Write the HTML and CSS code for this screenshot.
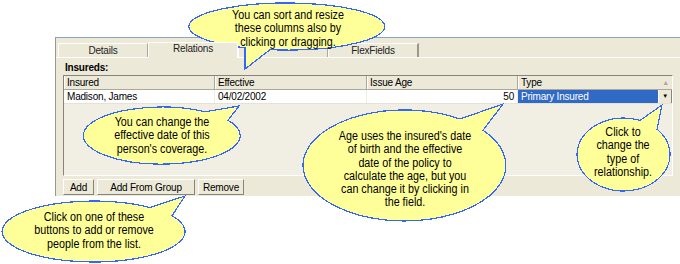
FILE: index.html
```html
<!DOCTYPE html>
<html lang="en">
<head>
  <meta charset="UTF-8">
  <title>Relations - Insureds</title>
  <link rel="stylesheet" href="styles.css">
</head>
<body>
  <div class="stage">
    <div class="window">
      <div class="tabs">
        <div class="tab">Details</div>
        <div class="tab active">Relations</div>
        <div class="tab"></div>
        <div class="tab last">FlexFields</div>
      </div>
      <div class="page">
        <div class="label">Insureds:</div>
        <div class="grid">
          <div class="row head">
            <div class="cell">Insured</div>
            <div class="cell">Effective</div>
            <div class="cell">Issue Age</div>
            <div class="cell">Type <span class="sort">&#9650;</span></div>
          </div>
          <div class="row data">
            <div class="cell">Madison, James</div>
            <div class="cell">04/02/2002</div>
            <div class="cell num">50</div>
            <div class="cell pick">
              <span class="picked">Primary Insured</span>
              <span class="drop">&#9660;</span>
            </div>
          </div>
        </div>
        <div class="buttons">
          <button class="btn add">Add</button>
          <button class="btn group">Add From Group</button>
          <button class="btn remove">Remove</button>
        </div>
      </div>
    </div>

    <!-- callouts drawn over the screenshot -->
    <svg class="bubbles" width="680" height="264" viewBox="0 0 680 264" xmlns="http://www.w3.org/2000/svg">
      <path d="M 270 49.7 A 98 23.5 0 1 0 245 47.8 L 245 69 Z" />
      <path d="M 205 111.8 A 78.5 28.5 0 1 0 228 120.3 L 239 106 Z" />
      <path d="M 460 119 A 101.5 55.5 0 1 0 483 130.3 L 503 104 Z" />
      <path d="M 640 120.4 A 46.5 36.5 0 1 0 657 129.2 L 662 105 Z" />
      <path d="M 150 207.5 A 91.5 30.5 0 1 0 172 215.8 L 185 196 Z" />
    </svg>
    <div class="note note-sort">You can sort and resize<br>these columns also by<br>clicking or dragging.</div>
    <div class="note note-date">You can change the<br>effective date of this<br>person's coverage.</div>
    <div class="note note-age">Age uses the insured's date<br>of birth and the effective<br>date of the policy to<br>calculate the age, but you<br>can change it by clicking in<br>the field.</div>
    <div class="note note-type">Click to<br>change the<br>type of<br>relationship.</div>
    <div class="note note-buttons">Click on one of these<br>buttons to add or remove<br>people from the list.</div>
  </div>
</body>
</html>
```

FILE: styles.css
```css
body {
  margin: 0;
  background: #fff;
  font-family: "Liberation Sans", Arial, sans-serif;
  font-size: 10px;
  letter-spacing: -0.2px;
  color: #000;
}

.stage {
  position: relative;
  width: 680px;
  height: 264px;
  overflow: hidden;
}

.window {
  margin: 37px 0 0 55px;
  height: 158px;
  background: #ece9d8;
  border-top: 1px solid #8ea3c9;
  border-left: 1px solid #9a988c;
  display: flex;
  flex-direction: column;
}

.tabs {
  display: flex;
  align-items: flex-end;
  height: 19px;
  padding-left: 2px;
}
.tab {
  width: 88px;
  height: 12px;
  line-height: 12px;
  text-align: center;
  color: #222;
  border-top: 1px solid #fff;
  border-left: 1px solid #fff;
  border-right: 1px solid #aca899;
  padding-top: 1px;
}
.tab.active {
  height: 15px;
  line-height: 12px;
  padding-top: 0;
  margin-bottom: -1px;
  background: #ece9d8;
  position: relative;
  z-index: 1;
  border-right-color: #fff;
}
.tab.last {
  border-right: 2px solid #9a988c;
}

.page {
  flex: 1;
  border-top: 1px solid #fff;
  padding: 4px 0 0 7px;
  display: flex;
  flex-direction: column;
}

.label {
  font-weight: bold;
  padding-left: 2px;
  height: 13px;
  line-height: 12px;
}

.grid {
  width: 608px;
  height: 99px;
  background: #f1efe4;
  border-top: 1px solid #87857a;
  border-left: 1px solid #87857a;
  border-bottom: 1px solid #fff;
  border-right: 1px solid #fff;
}
.row {
  display: grid;
  grid-template-columns: 151px 152px 151px 154px;
  height: 13px;
  line-height: 13px;
}
.row.head {
  background: #ece9d8;
  border-bottom: 1px solid #aca899;
}
.row.head .cell {
  border-right: 1px solid #aca899;
  box-shadow: inset 1px 0 0 #fff;
  padding-left: 3px;
  position: relative;
}
.row.head .cell:last-child {
  border-right: none;
}
.sort {
  position: absolute;
  right: 3px;
  top: 0;
  font-size: 7px;
  color: #aca899;
}
.row.data {
  background: #fff;
  border-bottom: 1px solid #e3e1d8;
}
.row.data .cell {
  padding-left: 3px;
  border-right: 1px solid #eeede6;
}
.row.data .cell.num {
  text-align: right;
  padding-right: 3px;
  padding-left: 0;
}
.row.data .cell.pick {
  display: flex;
  padding: 0;
  border-right: none;
}
.picked {
  flex: 1;
  background: #316ac5;
  color: #fff;
  padding-left: 3px;
}
.drop {
  width: 12px;
  background: #ece9d8;
  border-left: 1px solid #fff;
  border-right: 1px solid #87857a;
  font-size: 6px;
  text-align: center;
  line-height: 13px;
}

.buttons {
  display: flex;
  gap: 3px;
  margin-top: 3px;
}
.btn {
  height: 16px;
  padding: 0;
  font-family: inherit;
  font-size: 10px;
  letter-spacing: -0.2px;
  color: #000;
  background: #ece9d8;
  border: 1px solid;
  border-color: #fff #87857a #87857a #fff;
}
.btn.add { width: 31px; }
.btn.group { width: 98px; }
.btn.remove { width: 46px; }

.bubbles {
  position: absolute;
  top: 0;
  left: 0;
  pointer-events: none;
}
.bubbles path {
  fill: #ffff99;
  stroke: #3366ff;
  stroke-width: 1.2;
  shape-rendering: crispEdges;
}

/* the callout face is a narrow sans, squeeze Liberation Sans to match */
.note {
  position: absolute;
  font-family: "Liberation Sans", Arial, sans-serif;
  font-size: 12.5px;
  letter-spacing: 0;
  line-height: 13.3px;
  text-align: center;
  color: #000;
  transform: scaleX(0.86);
  transform-origin: center top;
}
.note-sort { left: 208px; top: 9px; width: 160px; }
.note-date { left: 82px; top: 116px; width: 160px; }
.note-age { left: 305px; top: 130px; width: 200px; }
.note-type { left: 573px; top: 126px; width: 100px; }
.note-buttons { left: 9px; top: 211px; width: 170px; }
```
